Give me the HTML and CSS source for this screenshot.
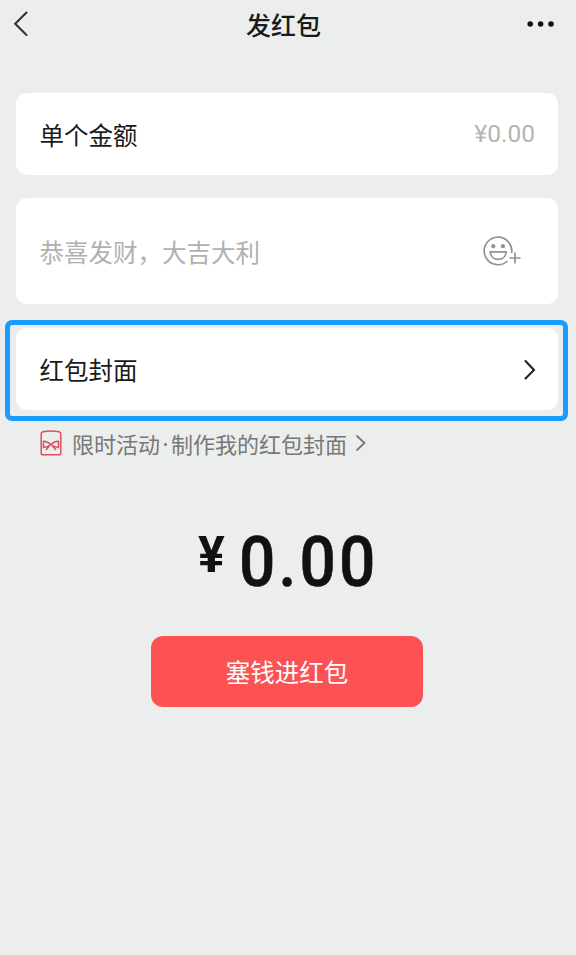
FILE: index.html
```html
<!DOCTYPE html>
<html lang="zh-CN">
<head>
<meta charset="UTF-8">
<title>发红包</title>
<link rel="stylesheet" href="styles.css">
</head>
<body>
<header class="nav">
  <svg class="back" width="16" height="28" viewBox="0 0 16 28"><path d="M13.5 2.5 2.2 13.8 13.5 25" fill="none" stroke="#333" stroke-width="2.1" stroke-linecap="round"/></svg>
  <h1 class="title">发红包</h1>
  <svg class="more" width="28" height="6" viewBox="0 0 28 6"><circle cx="3.2" cy="3" r="2.8"/><circle cx="13.6" cy="3" r="2.8"/><circle cx="24" cy="3" r="2.8"/></svg>
</header>
<main class="form">
  <section class="card amount">
    <span class="label">单个金额</span>
    <span class="value">¥0.00</span>
  </section>
  <section class="card message">
    <span class="placeholder">恭喜发财，大吉大利</span>
    <svg class="smile" width="38" height="32" viewBox="0 0 38 32" fill="none" stroke="#929292" stroke-width="1.7">
      <path d="M28.6 18.2A13.8 13.8 0 1 0 24.4 26"/>
      <circle cx="10.3" cy="11.2" r="2.1" fill="#929292" stroke="none"/>
      <circle cx="20" cy="11.2" r="2.1" fill="#929292" stroke="none"/>
      <path d="M7.2 16.8H23.2C22.8 21.5 19.4 24.4 15.2 24.4S7.6 21.5 7.2 16.8Z"/>
      <path d="M26.5 23H37.5M32 17.5V28.5"/>
    </svg>
  </section>
  <div class="highlight">
    <section class="card cover">
      <span class="label">红包封面</span>
      <svg class="arrow" width="14" height="22" viewBox="0 0 14 22"><path d="M2.5 3 11 12 2.5 20.5" fill="none" stroke="#222" stroke-width="2.1" stroke-linecap="round"/></svg>
    </section>
  </div>
  <div class="promo">
    <svg class="envelope" width="22" height="26" viewBox="0 0 22 26" fill="none" stroke="#d9505c" stroke-width="1.5">
      <path d="M1.2 3.5Q1.2 2.2 3 1.7Q11 .2 19 1.7Q20.8 2.2 20.8 3.5V23Q20.8 24.8 19 24.8H3Q1.2 24.8 1.2 23Z"/>
      <path d="M10.8 14.5C8 12.5 5.5 11 3.5 11.4V17.5C6 17.5 8.5 16.5 10.8 14.5C13.5 12.5 16 11 18.5 11.4V17.5C16 17.5 13.5 16.5 10.8 14.5M9.5 15.5 6 20M12.2 15.5 16 20"/>
    </svg>
    <span class="promo-text"><span>限时活动</span><i class="dot"></i><span>制作我的红包封面</span></span>
    <svg class="promo-arrow" width="12" height="18" viewBox="0 0 12 18"><path d="M2 2 9.5 9 2 16" fill="none" stroke="#777" stroke-width="1.8" stroke-linecap="round"/></svg>
  </div>
  <div class="total"><span class="yen">¥</span><span class="sum">0.00</span></div>
  <button class="submit">塞钱进红包</button>
</main>
</body>
</html>
```
FILE: styles.css
```css
* { box-sizing: border-box; }
body {
  margin: 0;
  min-height: 955px;
  background: #eceeed;
  color: #1a1a1a;
  font-family: "Noto Sans CJK SC", sans-serif;
}
.nav {
  display: grid;
  grid-template-columns: 100px 1fr 100px;
  align-items: center;
  height: 48px;
  padding: 0 21px 0 13px;
}
.title {
  margin: 0 1px 0 0;
  text-align: center;
  font-size: 25px;
  line-height: 48px;
  font-weight: 500;
}
.more { justify-self: end; fill: #111; }
.form {
  display: flex;
  flex-direction: column;
  padding-top: 45px;
}
.card {
  display: flex;
  align-items: center;
  justify-content: space-between;
  margin: 0 18px 0 16px;
  padding: 0 24px 0 23.5px;
  border-radius: 11px;
  background: #fff;
  font-size: 24.5px;
}
.amount { height: 82px; }
.value {
  color: #b4b4b4;
  font: 400 24.5px/30px Roboto, sans-serif;
  margin-right: -1px;
}
.message { height: 106px; margin-top: 23px; padding-right: 37px; }
.placeholder { color: #b0b0b0; }
.highlight {
  height: 101px;
  margin: 16px 8px 0 5px;
  padding: 3px 0;
  border: 5px solid #189cff;
  border-radius: 7px;
}
.cover { height: 82px; margin: 0 5px 0 6px; padding-right: 21px; }
.promo {
  display: flex;
  align-items: center;
  height: 32px;
  margin: 6px 0 0 40px;
  color: #777;
  font-size: 22px;
}
.promo-text {
  display: flex;
  align-items: center;
  margin: 0 8px 0 10px;
  line-height: 30px;
}
.dot {
  width: 3px;
  height: 3px;
  margin: 2px 4px 0;
  border-radius: 50%;
  background: #777;
}
.total {
  display: flex;
  align-items: flex-start;
  height: 72px;
  margin: 64px 0 0 198px;
  color: #111;
  font-family: Roboto, sans-serif;
  font-weight: 500;
}
.yen { width: 41px; padding-top: 2px; font-size: 50px; line-height: 60px; font-weight: 700; }
.sum {
  padding-top: 3px;
  font-size: 71px;
  line-height: 72px;
  letter-spacing: 3.6px;
  -webkit-text-stroke: .6px #111;
  transform: scaleX(.9);
  transform-origin: left;
}
.submit {
  width: 272px;
  height: 71px;
  margin: 41px 0 0 151px;
  padding: 0;
  border: 0;
  border-radius: 12px;
  background: #fc5253;
  color: #fff;
  font: 400 24.5px/36px "Noto Sans CJK SC", sans-serif;
}
```
